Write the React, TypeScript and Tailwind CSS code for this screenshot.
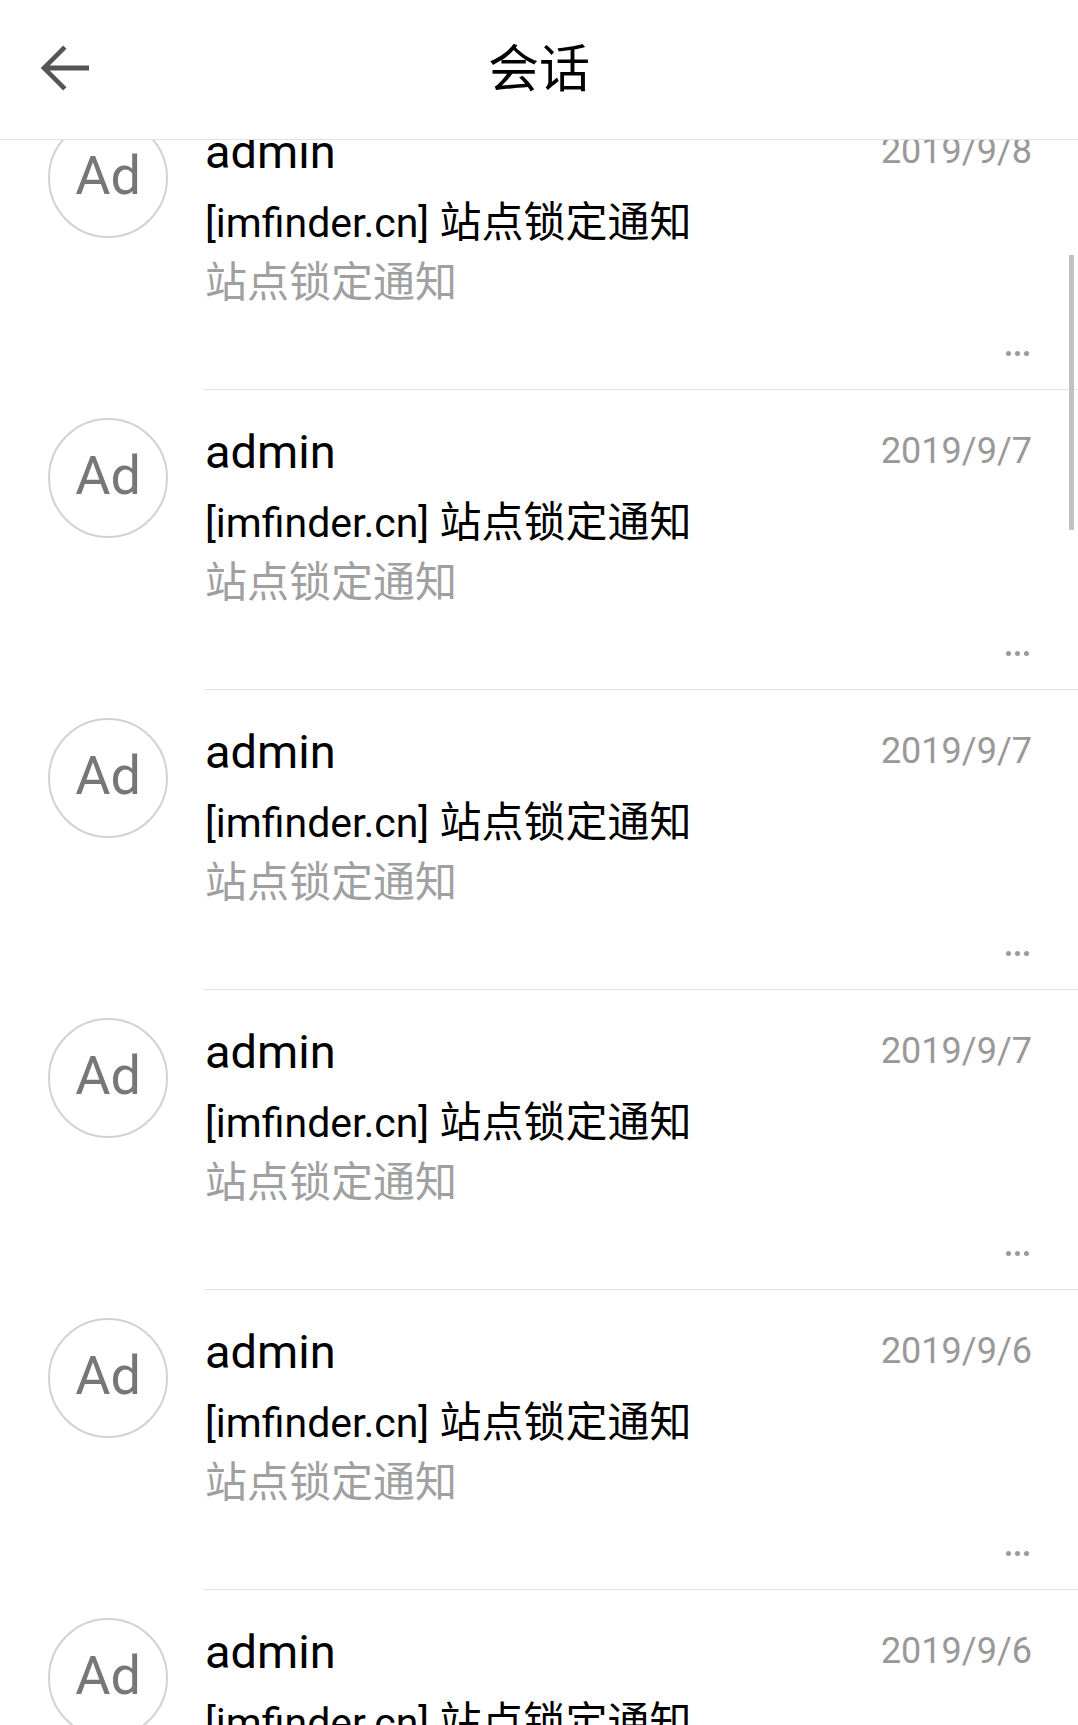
const rows = [
  { date: "2019/9/8" },
  { date: "2019/9/7" },
  { date: "2019/9/7" },
  { date: "2019/9/7" },
  { date: "2019/9/6" },
  { date: "2019/9/6" },
];

const font = { fontFamily: '"Roboto", "Noto Sans CJK SC", sans-serif' };

function BackArrow() {
  return (
    <svg width="72" height="72" viewBox="0 0 24 24" fill="#555555">
      <path d="M20 11.2H6.9l5.6-5.6L11.4 4.5 3.9 12l7.5 7.5 1.1-1.1-5.6-5.6H20v-1.6z" />
    </svg>
  );
}

function ConversationRow({ date }: { date: string }) {
  return (
    <div className="flex h-[300px]">
      <div className="w-[204px] shrink-0 pl-[48px] pt-[28px]">
        <div className="w-[120px] h-[120px] rounded-full border-2 border-[#d2d2d2] flex items-center justify-center">
          <span className="text-[54px] leading-none text-[#777777] pb-[4px]">Ad</span>
        </div>
      </div>
      <div className="flex-1 flex flex-col border-b border-[#e4e4e4] pl-[1px] pr-[46px]">
        <div className="flex items-start justify-between pt-[34px]">
          <span className="text-[47px] leading-[56px] text-black">admin</span>
          <span className="text-[36px] leading-[44px] text-[#999999] mt-[5px]">{date}</span>
        </div>
        <div className="mt-[13px] text-[41px] leading-[60px] text-black">
          [imfinder.cn] <span className="text-[42px]">站点锁定通知</span>
        </div>
        <div className="text-[42px] leading-[60px] text-[#a0a0a0]">站点锁定通知</div>
        <div className="mt-auto pb-[33px] pr-[3px] flex justify-end gap-[4px]">
          <span className="w-[5px] h-[5px] rounded-full bg-[#9a9a9a]" />
          <span className="w-[5px] h-[5px] rounded-full bg-[#9a9a9a]" />
          <span className="w-[5px] h-[5px] rounded-full bg-[#9a9a9a]" />
        </div>
      </div>
    </div>
  );
}

export default function App() {
  return (
    <div className="relative w-full h-[1725px] overflow-hidden bg-white" style={font}>
      <div className="relative z-10 h-[140px] bg-white border-b border-[#e2e2e2] flex items-center">
        <div className="pl-[29px] pb-[4px]">
          <BackArrow />
        </div>
        <div className="absolute inset-x-0 top-0 h-[139px] flex items-center justify-center pointer-events-none">
          <span className="text-[51px] leading-none text-black">会话</span>
        </div>
      </div>
      <div className="-mt-[50px]">
        {rows.map((r, i) => (
          <ConversationRow key={i} date={r.date} />
        ))}
      </div>
      <div className="absolute right-[4px] top-[255px] w-[5px] h-[275px] bg-[#c2c2c2]" />
    </div>
  );
}
